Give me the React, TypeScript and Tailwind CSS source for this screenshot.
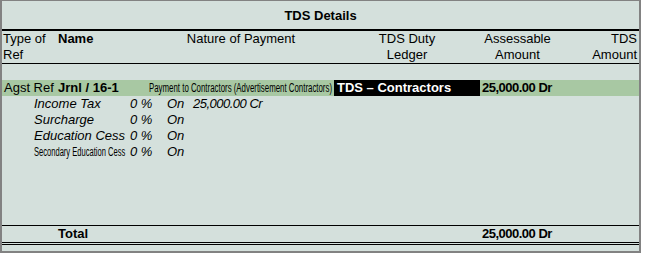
import React from 'react';

const font = { fontFamily: '"Liberation Sans", Arial, sans-serif' };

const taxRows = [
    { label: 'Income Tax', rate: '0 %', on: 'On', amount: '25,000.00 Cr', narrow: false },
    { label: 'Surcharge', rate: '0 %', on: 'On', amount: '', narrow: false },
    { label: 'Education Cess', rate: '0 %', on: 'On', amount: '', narrow: false },
    { label: 'Secondary Education Cess', rate: '0 %', on: 'On', amount: '', narrow: true },
];

export default function App() {
    return (
        <div className="bg-white w-[647px] h-[258px]" style={font}>
            <div className="w-[641px] h-[253px] border-t border-l-2 border-r-2 border-b-2 border-[#828282] bg-[#d4e0dc] text-black text-[13px] leading-[16px] flex flex-col">
                {/* Title */}
                <div className="h-[28px] pt-[7px] text-center font-bold">TDS Details</div>
                <div className="h-[2px] bg-black" />

                {/* Column headers */}
                <div className="h-[32px] grid grid-cols-[55px_91px_186px_146px_75px_84px]">
                    <div className="pl-[1px]">
                        <div>Type of</div>
                        <div>Ref</div>
                    </div>
                    <div className="pl-[1px] font-bold">Name</div>
                    <div className="text-center">Nature of Payment</div>
                    <div className="text-center">
                        <div>TDS Duty</div>
                        <div>Ledger</div>
                    </div>
                    <div className="text-center">
                        <div>Assessable</div>
                        <div>Amount</div>
                    </div>
                    <div className="text-right pr-[2px]">
                        <div>TDS</div>
                        <div>Amount</div>
                    </div>
                </div>
                <div className="h-px bg-black" />

                {/* Body */}
                <div className="flex-1 flex flex-col">
                    <div className="h-[16px]" />
                    <div className="h-[16px] bg-[#a8c8a3] grid grid-cols-[55px_91px_186px_146px_75px_84px] whitespace-nowrap">
                        <div className="pl-[2px]">Agst Ref</div>
                        <div className="pl-[1px] font-bold">Jrnl / 16-1</div>
                        <div className="pl-[1px] overflow-visible">
                            <span className="inline-block origin-left scale-x-[0.655] text-[12px] antialiased">
                                Payment to Contractors (Advertisement Contractors)
                            </span>
                        </div>
                        <div className="bg-black text-white font-bold pl-[3px]">TDS – Contractors</div>
                        <div className="pl-[2px] font-bold tracking-[-0.5px]">25,000.00 Dr</div>
                        <div />
                    </div>
                    {taxRows.map((row) => (
                        <div key={row.label} className="h-[16px] flex pl-[32px] italic whitespace-nowrap">
                            <div className="w-[96px]">
                                {row.narrow ? (
                                    <span className="inline-block origin-left scale-x-[0.63] text-[12px] not-italic antialiased">
                                        {row.label}
                                    </span>
                                ) : (
                                    row.label
                                )}
                            </div>
                            <div className="w-[37px]">{row.rate}</div>
                            <div className="w-[26px]">{row.on}</div>
                            <div className="tracking-[-0.5px]">{row.amount}</div>
                        </div>
                    ))}
                </div>

                {/* Total */}
                <div className="h-px bg-black" />
                <div className="h-[16px] grid grid-cols-[55px_91px_186px_146px_75px_84px] font-bold">
                    <div />
                    <div className="pl-[1px]">Total</div>
                    <div />
                    <div />
                    <div className="pl-[2px] tracking-[-0.5px] whitespace-nowrap">25,000.00 Dr</div>
                    <div />
                </div>
                <div className="h-[3px] border-t border-b border-black" />
                <div className="h-[6px]" />
            </div>
        </div>
    );
}
